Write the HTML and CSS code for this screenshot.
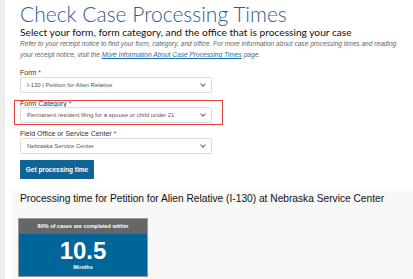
FILE: index.html
```html
<!DOCTYPE html>
<html>
<head>
  <title>Check Case Processing Times</title>
  <link rel="stylesheet" href="styles.css">
</head>
<body>
  <div class="page">
    <div class="content">
      <h1>Check Case Processing Times</h1>
      <h2>Select your form, form category, and the office that is processing your case</h2>
      <p class="intro">Refer to your receipt notice to find your form, category, and office. For more information about case processing times and reading your receipt notice, visit the <a href="#">More Information About Case Processing Times</a> page.</p>

      <div class="form-group">
        <label>Form <span class="req">*</span></label>
        <div class="select">I-130 | Petition for Alien Relative</div>
      </div>

      <div class="form-group highlight">
        <label>Form Category <span class="req">*</span></label>
        <div class="select">Permanent resident filing for a spouse or child under 21</div>
      </div>

      <div class="form-group office">
        <label>Field Office or Service Center <span class="req">*</span></label>
        <div class="select">Nebraska Service Center</div>
      </div>

      <button type="button">Get processing time</button>
    </div>

    <div class="results">
      <h3>Processing time for Petition for Alien Relative (I-130) at Nebraska Service Center</h3>
      <div class="time-card">
        <div class="time-head">80% of cases are completed within</div>
        <div class="time-body">
          <div class="time-num">10.5</div>
          <div class="time-unit">Months</div>
        </div>
      </div>
    </div>
  </div>
</body>
</html>
```

FILE: styles.css
```css
body {
  margin: 0;
  font-family: "Liberation Sans", Arial, sans-serif;
  background-color: #fff;
  overflow: hidden;
}

.page {
  border-left: 5px solid #ededed;
  min-height: 279px;
}

.content {
  padding: 0 4px 0 15px;
}

h1 {
  margin: 0;
  padding-top: 1px;
  font-family: Lato, sans-serif;
  font-weight: 300;
  font-size: 21px;
  line-height: 25px;
  color: #2f5d92;
}

h2 {
  margin: 0;
  font-family: Lato, sans-serif;
  font-weight: 400;
  font-size: 10.2px;
  line-height: 12px;
  color: #111;
}

.intro {
  margin: 0;
  font-size: 6.6px;
  line-height: 11px;
  font-style: italic;
  color: #666;
}

.intro a {
  color: #1f6aa5;
}

.form-group {
  margin-top: 9px;
  width: 192px;
}

label {
  display: block;
  font-size: 7px;
  line-height: 8px;
  color: #333;
}

.req {
  color: #d22;
}

.select {
  height: 14px;
  line-height: 14px;
  padding: 0 6px;
  border: 1px solid #ddd;
  border-radius: 2px;
  font-size: 6px;
  color: #555;
  position: relative;
}

.select:after {
  content: "";
  position: absolute;
  right: 6px;
  top: 4px;
  width: 3px;
  height: 3px;
  border-right: 1px solid #666;
  border-bottom: 1px solid #666;
  transform: rotate(45deg);
}

.highlight {
  margin-left: -6px;
  margin-top: 7px;
  padding: 0 10px 1px 5px;
  border: 1.5px solid #e8413d;
}

.highlight label {
  line-height: 6px;
}

.office {
  margin-top: 5px;
}

button {
  margin-top: 6px;
  padding: 0;
  width: 74px;
  height: 19px;
  background-color: #0f6495;
  color: #fff;
  border: none;
  border-radius: 1px;
  font-family: "Liberation Sans", Arial, sans-serif;
  font-size: 6.5px;
  font-weight: bold;
}

.results {
  margin-top: 12px;
  margin-left: 7px;
  background-color: #f8f8f8;
  padding: 1px 0 10px 8px;
}

h3 {
  margin: 0;
  padding-top: 1px;
  font-size: 10.2px;
  line-height: 12px;
  font-weight: 400;
  color: #111;
}

.time-card {
  margin-top: 13px;
  margin-left: -2px;
  width: 128px;
  border: 1px solid #999;
}

.time-head {
  background-color: #666;
  color: #fff;
  font-size: 5.5px;
  font-weight: bold;
  text-align: center;
  height: 15px;
  line-height: 15px;
}

.time-body {
  background-color: #00669a;
  color: #fff;
  text-align: center;
  height: 42px;
}

.time-num {
  font-size: 24px;
  font-weight: bold;
  line-height: 24px;
  padding-top: 5px;
}

.time-unit {
  font-size: 5.5px;
  font-weight: bold;
  line-height: 8px;
}
```
